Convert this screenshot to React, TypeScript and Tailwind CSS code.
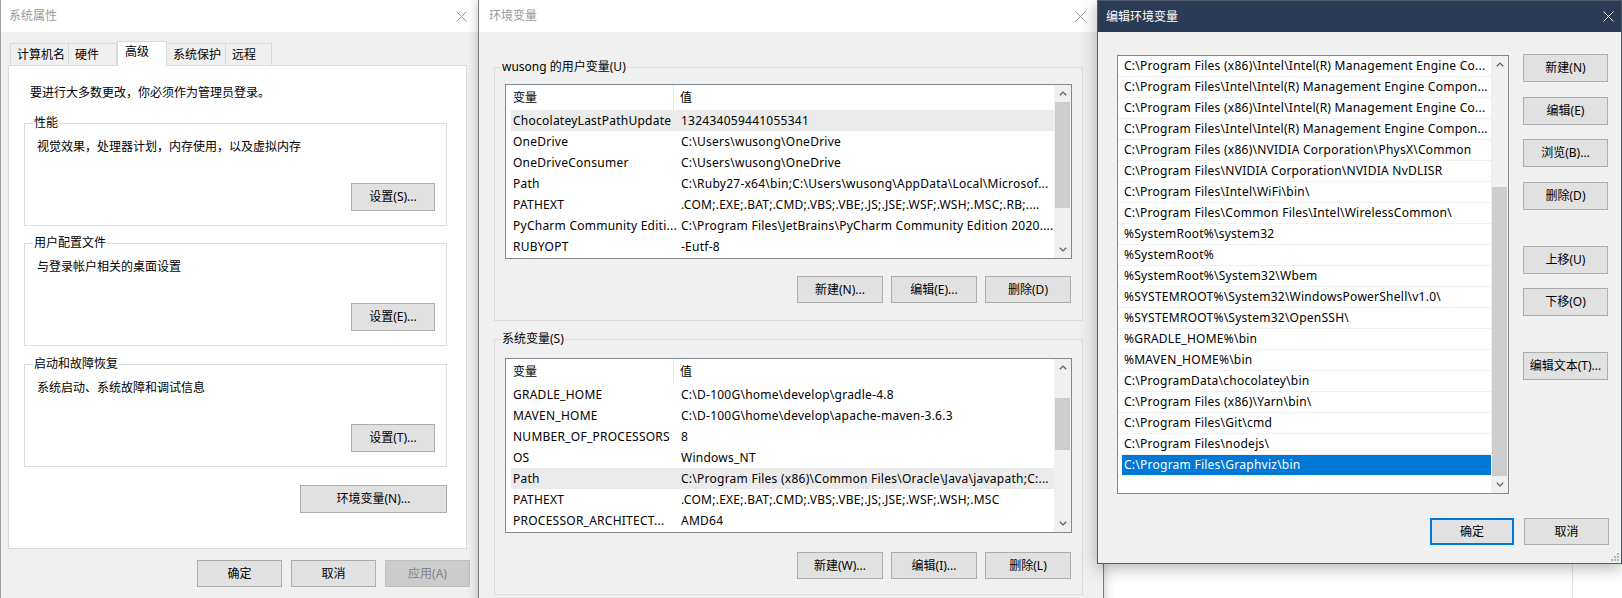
import React from "react";

type Row = [string, string];

const userVars: Row[] = [
  ["ChocolateyLastPathUpdate", "132434059441055341"],
  ["OneDrive", "C:\\Users\\wusong\\OneDrive"],
  ["OneDriveConsumer", "C:\\Users\\wusong\\OneDrive"],
  ["Path", "C:\\Ruby27-x64\\bin;C:\\Users\\wusong\\AppData\\Local\\Microsof..."],
  ["PATHEXT", ".COM;.EXE;.BAT;.CMD;.VBS;.VBE;.JS;.JSE;.WSF;.WSH;.MSC;.RB;...."],
  ["PyCharm Community Editi...", "C:\\Program Files\\JetBrains\\PyCharm Community Edition 2020...."],
  ["RUBYOPT", "-Eutf-8"],
];

const sysVars: Row[] = [
  ["GRADLE_HOME", "C:\\D-100G\\home\\develop\\gradle-4.8"],
  ["MAVEN_HOME", "C:\\D-100G\\home\\develop\\apache-maven-3.6.3"],
  ["NUMBER_OF_PROCESSORS", "8"],
  ["OS", "Windows_NT"],
  ["Path", "C:\\Program Files (x86)\\Common Files\\Oracle\\Java\\javapath;C:..."],
  ["PATHEXT", ".COM;.EXE;.BAT;.CMD;.VBS;.VBE;.JS;.JSE;.WSF;.WSH;.MSC"],
  ["PROCESSOR_ARCHITECT...", "AMD64"],
];

const pathItems: string[] = [
  "C:\\Program Files (x86)\\Intel\\Intel(R) Management Engine Co...",
  "C:\\Program Files\\Intel\\Intel(R) Management Engine Compon...",
  "C:\\Program Files (x86)\\Intel\\Intel(R) Management Engine Co...",
  "C:\\Program Files\\Intel\\Intel(R) Management Engine Compon...",
  "C:\\Program Files (x86)\\NVIDIA Corporation\\PhysX\\Common",
  "C:\\Program Files\\NVIDIA Corporation\\NVIDIA NvDLISR",
  "C:\\Program Files\\Intel\\WiFi\\bin\\",
  "C:\\Program Files\\Common Files\\Intel\\WirelessCommon\\",
  "%SystemRoot%\\system32",
  "%SystemRoot%",
  "%SystemRoot%\\System32\\Wbem",
  "%SYSTEMROOT%\\System32\\WindowsPowerShell\\v1.0\\",
  "%SYSTEMROOT%\\System32\\OpenSSH\\",
  "%GRADLE_HOME%\\bin",
  "%MAVEN_HOME%\\bin",
  "C:\\ProgramData\\chocolatey\\bin",
  "C:\\Program Files (x86)\\Yarn\\bin\\",
  "C:\\Program Files\\Git\\cmd",
  "C:\\Program Files\\nodejs\\",
  "C:\\Program Files\\Graphviz\\bin",
];

const tabs = [
  { label: "计算机名", w: "w-[59px]" },
  { label: "硬件", w: "w-[48px]" },
  { label: "高级", w: "w-[50px]", active: true },
  { label: "系统保护", w: "w-[59px]" },
  { label: "远程", w: "w-[46px]" },
];

// plain Win10 push button
const btn =
  "flex shrink-0 items-center justify-center border border-[#adadad] bg-[#e1e1e1] text-black";

function CloseIcon({ color }: { color: string }) {
  return (
    <svg width="11" height="11" viewBox="0 0 11 11">
      <path d="M0.5 0.5L10.5 10.5M10.5 0.5L0.5 10.5" stroke={color} strokeWidth="1" />
    </svg>
  );
}

function Chevron({ up }: { up?: boolean }) {
  return (
    <svg width="8" height="5" viewBox="0 0 8 5">
      <path
        d={up ? "M0.8 4.3L4 1.1L7.2 4.3" : "M0.8 0.7L4 3.9L7.2 0.7"}
        stroke="#606060"
        strokeWidth="1.3"
        fill="none"
      />
    </svg>
  );
}

function ScrollBar({ thumb }: { thumb: string }) {
  return (
    <div className="flex w-[17px] shrink-0 flex-col bg-[#f0f0f0]">
      <div className="flex h-[17px] shrink-0 items-center justify-center">
        <Chevron up />
      </div>
      <div className="flex flex-1 flex-col px-[1px]">
        <div className={`bg-[#cdcdcd] ${thumb}`} />
      </div>
      <div className="flex h-[17px] shrink-0 items-center justify-center">
        <Chevron />
      </div>
    </div>
  );
}

function VarList({ rows, selected, thumb }: { rows: Row[]; selected: number; thumb: string }) {
  return (
    <div className="flex h-[175px] w-[567px] border border-[#828790] bg-white">
      <div className="flex min-w-0 flex-1 flex-col">
        {/* header */}
        <div className="flex h-[25px] shrink-0">
          <div className="flex w-[168px] items-center border-r border-[#e5e5e5] pl-[7px]">变量</div>
          <div className="flex items-center pl-[6px]">值</div>
        </div>
        {rows.map(([name, value], i) => (
          <div key={name} className="flex h-[21px] shrink-0 pl-[5px] tracking-[0.25px]">
            <div className={`flex min-w-0 flex-1 items-center ${i === selected ? "bg-[#ebebeb]" : ""}`}>
              <div className="w-[168px] shrink-0 overflow-hidden whitespace-nowrap pl-[2px]">{name}</div>
              <div className="overflow-hidden whitespace-nowrap pl-[2px]">{value}</div>
            </div>
          </div>
        ))}
      </div>
      <ScrollBar thumb={thumb} />
    </div>
  );
}

function SettingsGroup({ label, text, button, className }: { label: string; text: string; button: string; className: string }) {
  return (
    <div className={`relative flex h-[103px] w-[423px] flex-col border border-[#dcdcdc] pt-[15px] pl-[12px] pr-[11px] ${className}`}>
      <span className="absolute top-[-9px] left-[8px] bg-white px-[1px]">{label}</span>
      <div className="h-[16px]">{text}</div>
      <div className={`${btn} mt-[28px] h-[28px] w-[84px] self-end`}>{button}</div>
    </div>
  );
}

function SystemProperties() {
  return (
    <div className="absolute top-0 left-0 flex h-[620px] w-[484px] flex-col border-l border-[#a0a0a0] bg-[#f0f0f0]">
      <div className="flex h-[32px] shrink-0 items-center justify-between bg-white">
        <span className="pl-[8px] text-[#999999]">系统属性</span>
        <div className="flex h-full w-[46px] items-center justify-center">
          <CloseIcon color="#999999" />
        </div>
      </div>

      <div className="pl-[7px]">
        {/* tabs */}
        <div className="mt-[9px] flex h-[24px] items-end pl-[2px]">
          {tabs.map((t, i) =>
            t.active ? (
              <div
                key={t.label}
                className={`relative z-10 mb-[-1px] flex h-[25px] ${t.w} items-start border border-b-0 border-[#d9d9d9] bg-white pt-[2px] pl-[7px]`}
              >
                {t.label}
              </div>
            ) : (
              <div
                key={t.label}
                className={`flex h-[22px] ${t.w} items-center border-t border-r border-[#d9d9d9] bg-[#f0f0f0] pl-[6px] ${i === 0 ? "border-l" : ""}`}
              >
                {t.label}
              </div>
            )
          )}
        </div>

        {/* tab page */}
        <div className="flex h-[484px] w-[459px] flex-col border border-[#d9d9d9] bg-white pt-[19px] pl-[15px]">
          <div className="ml-[6px] h-[16px]">要进行大多数更改，你必须作为管理员登录。</div>
          <SettingsGroup
            className="mt-[22px]"
            label="性能"
            text="视觉效果，处理器计划，内存使用，以及虚拟内存"
            button="设置(S)..."
          />
          <SettingsGroup
            className="mt-[17px]"
            label="用户配置文件"
            text="与登录帐户相关的桌面设置"
            button="设置(E)..."
          />
          <SettingsGroup
            className="mt-[18px]"
            label="启动和故障恢复"
            text="系统启动、系统故障和调试信息"
            button="设置(T)..."
          />
          <div className="mt-[18px] flex w-[423px] justify-end">
            <div className={`${btn} h-[28px] w-[147px]`}>环境变量(N)...</div>
          </div>
        </div>

        {/* dialog buttons */}
        <div className="mt-[11px] flex gap-[9px] pl-[189px]">
          <div className={`${btn} h-[27px] w-[85px]`}>确定</div>
          <div className={`${btn} h-[27px] w-[85px]`}>取消</div>
          <div className="flex h-[27px] w-[85px] items-center justify-center border border-[#bfbfbf] bg-[#cccccc] text-[#838383]">
            应用(A)
          </div>
        </div>
      </div>
    </div>
  );
}

function EnvGroup({ label, rows, selected, thumb, buttons, className, h, listTop, btnTop }: {
  label: string;
  rows: Row[];
  selected: number;
  thumb: string;
  buttons: string[];
  className: string;
  h: string;
  listTop: string;
  btnTop: string;
}) {
  return (
    <div className={`relative flex w-[589px] flex-col border border-[#dcdcdc] pl-[10px] pr-[11px] ${h} ${listTop} ${className}`}>
      <span className="absolute top-[-9px] left-[6px] bg-[#f0f0f0] px-[1px]">{label}</span>
      <VarList rows={rows} selected={selected} thumb={thumb} />
      <div className={`flex justify-end gap-[8px] ${btnTop}`}>
        {buttons.map((b) => (
          <div key={b} className={`${btn} h-[27px] w-[86px]`}>
            {b}
          </div>
        ))}
      </div>
    </div>
  );
}

function EnvironmentVariables() {
  return (
    <div className="absolute top-0 left-[478px] flex h-[620px] w-[626px] flex-col border-x border-[#7a7a7a] bg-[#f0f0f0] shadow-[0_0_10px_rgba(0,0,0,0.25)]">
      <div className="flex h-[32px] shrink-0 items-center justify-between bg-white">
        <span className="pl-[10px] text-[#999999]">环境变量</span>
        <div className="flex h-full w-[46px] items-center justify-center">
          <CloseIcon color="#999999" />
        </div>
      </div>
      <div className="flex flex-col pl-[15px]">
        <EnvGroup
          className="mt-[35px]"
          h="h-[254px]"
          listTop="pt-[16px]"
          btnTop="mt-[17px]"
          label="wusong 的用户变量(U)"
          rows={userVars}
          selected={0}
          thumb="h-[106px]"
          buttons={["新建(N)...", "编辑(E)...", "删除(D)"]}
        />
        <EnvGroup
          className="mt-[18px]"
          h="h-[256px]"
          listTop="pt-[18px]"
          btnTop="mt-[19px]"
          label="系统变量(S)"
          rows={sysVars}
          selected={4}
          thumb="mt-[22px] h-[52px]"
          buttons={["新建(W)...", "编辑(I)...", "删除(L)"]}
        />
      </div>
    </div>
  );
}

function EditEnvironmentVariable() {
  return (
    <div className="absolute top-0 left-[1097px] flex h-[564px] w-[525px] flex-col border border-[#4f5b6b] bg-[#f0f0f0] shadow-[0_4px_16px_rgba(0,0,0,0.3)]">
      <div className="flex h-[31px] shrink-0 items-center justify-between bg-[#2a3b55] text-white">
        <span className="pl-[8px]">编辑环境变量</span>
        <div className="pr-[7px]">
          <CloseIcon color="#ffffff" />
        </div>
      </div>

      <div className="mt-[23px] flex items-start pl-[19px]">
        {/* path list */}
        <div className="flex h-[439px] w-[392px] border border-[#828790] bg-white">
          <div className="flex min-w-0 flex-1 flex-col">
            {pathItems.map((p, i) => (
              <div key={i} className="flex h-[21px] shrink-0 border-b border-[#f0f0f0] pl-[4px] tracking-[0.25px]">
                <div
                  className={`flex min-w-0 flex-1 items-center overflow-hidden whitespace-nowrap pl-[2px] ${
                    i === pathItems.length - 1 ? "bg-[#0078d7] text-white" : ""
                  }`}
                >
                  {p}
                </div>
              </div>
            ))}
          </div>
          <ScrollBar thumb="mt-[114px] h-[289px]" />
        </div>

        {/* side buttons */}
        <div className="mt-[-1px] ml-[14px] flex flex-col">
          <div className={`${btn} h-[28px] w-[85px]`}>新建(N)</div>
          <div className={`${btn} mt-[15px] h-[28px] w-[85px]`}>编辑(E)</div>
          <div className={`${btn} mt-[14px] h-[28px] w-[85px]`}>浏览(B)...</div>
          <div className={`${btn} mt-[15px] h-[28px] w-[85px]`}>删除(D)</div>
          <div className={`${btn} mt-[36px] h-[28px] w-[85px]`}>上移(U)</div>
          <div className={`${btn} mt-[14px] h-[28px] w-[85px]`}>下移(O)</div>
          <div className={`${btn} mt-[36px] h-[28px] w-[85px]`}>编辑文本(T)...</div>
        </div>
      </div>

      <div className="mt-[24px] flex justify-end gap-[10px] pr-[12px]">
        <div className="flex h-[27px] w-[84px] items-center justify-center border-2 border-[#0078d7] bg-[#e1e1e1]">确定</div>
        <div className={`${btn} h-[27px] w-[85px]`}>取消</div>
      </div>

      {/* size grip */}
      <svg className="absolute right-[2px] bottom-[2px]" width="9" height="9" viewBox="0 0 9 9">
        {[
          [7, 1],
          [4, 4],
          [7, 4],
          [1, 7],
          [4, 7],
          [7, 7],
        ].map(([x, y]) => (
          <rect key={`${x}-${y}`} x={x} y={y} width="2" height="2" fill="#b4b4b4" />
        ))}
      </svg>
    </div>
  );
}

export default function App() {
  return (
    <div className="relative h-[598px] w-[1622px] overflow-hidden bg-white font-['Noto_Sans','Noto_Sans_CJK_SC',sans-serif] text-[12px] leading-[16px] text-black">
      <div className="absolute top-[564px] left-[1572px] h-[34px] w-px bg-[#e3e3e3]" />
      <SystemProperties />
      <EnvironmentVariables />
      <EditEnvironmentVariable />
    </div>
  );
}
